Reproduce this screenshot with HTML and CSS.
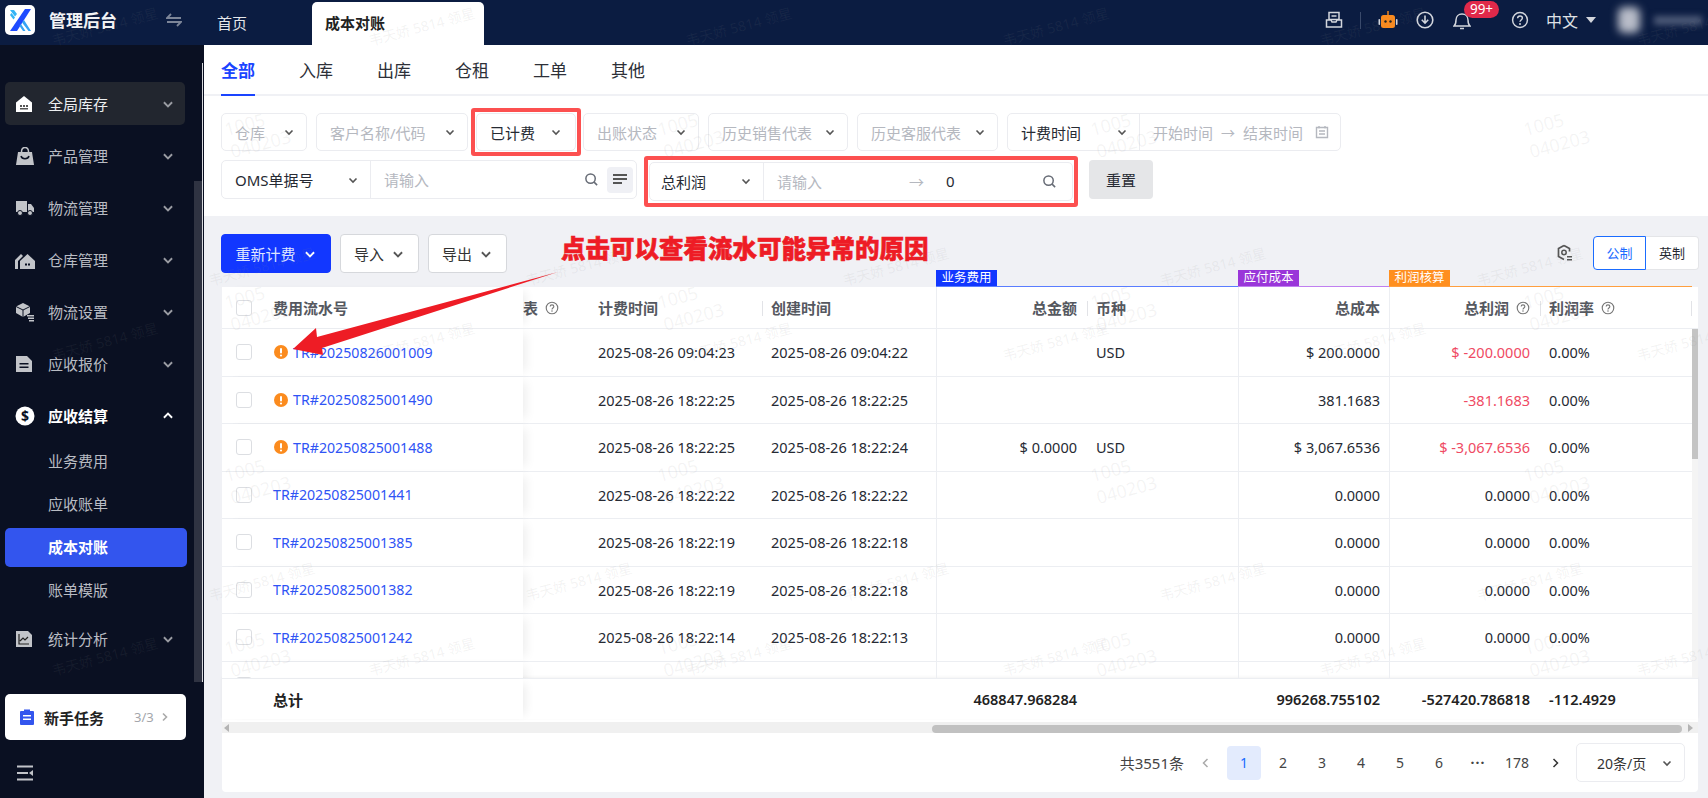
FILE: index.html
```html
<!DOCTYPE html>
<html lang="zh">
<head>
  <meta charset="UTF-8" />
  <title>成本对账</title>
  <link rel="stylesheet" href="styles.css">
</head>
<body>
  <svg class="defs" width="0" height="0">
    <symbol id="chev" viewBox="0 0 12 12"><path d="M2.5 4.5 6 8l3.5-3.5" fill="none" stroke="currentColor" stroke-width="1.6"/></symbol>
    <symbol id="help" viewBox="0 0 16 16"><circle cx="8" cy="8" r="6.6" fill="none" stroke="currentColor" stroke-width="1.3"/><path d="M5.9 6.4c0-1.2 1-2 2.1-2s2.1.8 2.1 1.9c0 1.700-2.100 1.700-2.100 3.300" fill="none" stroke="currentColor" stroke-width="1.300"/><circle cx="8" cy="11.500" r=".9" fill="currentColor"/></symbol>
    <symbol id="search" viewBox="0 0 16 16"><circle cx="7" cy="7" r="5" fill="none" stroke="currentColor" stroke-width="1.6"/><path d="m10.800 10.800 3.200 3.200" stroke="currentColor" stroke-width="1.6"/></symbol>
    <symbol id="warn" viewBox="0 0 14 14"><circle cx="7" cy="7" r="7" fill="#fb8b1e"/><rect x="6" y="3" width="2" height="5.500" rx="1" fill="#fff"/><circle cx="7" cy="10.500" r="1.100" fill="#fff"/></symbol>
  </svg>

  <header class="topbar">
    <div class="brand">
      <div class="logo">
        <svg width="26" height="26" viewBox="0 0 26 26"><path d="M3 3h4l3 4-2 2.500zM3 8l3.500 4.500L8 10.500 4.500 6z" fill="#35b4f5"/><path d="M24 2h-6L3 24h7z" fill="#1f4bff"/><path d="M15 15.500l2-2.500 7 11h-2.500zM12.500 19l1.500-2 4.500 7h-2.500z" fill="#35a4f5"/></svg>
      </div>
      <span class="brand-name">管理后台</span>
      <svg class="swap" width="16" height="14" viewBox="0 0 16 14"><path d="M5 1 1 5h14M11 13l4-4H1" fill="none" stroke="#7c8598" stroke-width="1.800"/></svg>
    </div>
    <div class="tabs-top">
      <span class="tab-home">首页</span>
      <span class="tab-cur">成本对账</span>
    </div>
    <div class="top-right">
      <svg class="ti" width="18" height="18" viewBox="0 0 18 18"><path d="M4 1.500h10v7H4zM1.500 9H6l1 2h4l1-2h4.500v7h-15zM6.500 5h5" fill="none" stroke="#d3d6dd" stroke-width="1.500"/></svg>
      <i class="top-sep"></i>
      <svg class="ti bot" width="20" height="20" viewBox="0 0 20 20"><rect x="3" y="5" width="14" height="13" rx="2.500" fill="#fb8b1e"/><rect x="9.300" y="1" width="1.400" height="4" fill="#fb8b1e"/><rect x="0.500" y="9" width="1.600" height="6" rx=".8" fill="#d3d6dd"/><rect x="17.900" y="9" width="1.600" height="6" rx=".8" fill="#d3d6dd"/><circle cx="7.500" cy="11.500" r="1.200" fill="#222"/><circle cx="12.500" cy="11.500" r="1.200" fill="#222"/></svg>
      <svg class="ti dl" width="18" height="18" viewBox="0 0 18 18"><circle cx="9" cy="9" r="7.800" fill="none" stroke="#d3d6dd" stroke-width="1.600"/><path d="M9 4.500v7M5.800 8.800 9 12.200l3.200-3.400" fill="none" stroke="#d3d6dd" stroke-width="1.600"/></svg>
      <span class="bell">
        <svg width="18" height="20" viewBox="0 0 18 20"><path d="M1 16c2-1.500 2-3 2-6 0-3.500 2.500-6 6-6s6 2.500 6 6c0 3 0 4.500 2 6zM7 18.500h4" fill="none" stroke="#d3d6dd" stroke-width="1.500"/></svg>
        <b class="badge">99+</b>
      </span>
      <svg class="ti qm" width="18" height="18"><use href="#help" fill="#d3d6dd" color="#d3d6dd"/></svg>
      <span class="lang">中文</span>
      <i class="caret"></i>
      <span class="avatar"></span>
      <span class="uname"></span>
    </div>
  </header>

  <div class="layout">
    <aside class="sidebar">
      <nav class="menu">
        <div class="mi mi-open">
          <svg width="18" height="18" viewBox="0 0 18 18"><path d="M1 7.500 9 1l8 6.500V17H1z" fill="#fff"/><path d="M5 10h2v2H5zm3 0h2v2H8zm3 0h2v2h-2zm-6 3h8v1.500H5z" fill="#555"/></svg>
          <span>全局库存</span><svg class="c" width="14" height="14"><use href="#chev"/></svg>
        </div>
        <div class="mi">
          <svg width="20" height="18" viewBox="0 0 20 18"><path d="M3 5h14l2 13H1z" fill="#c2c4c9"/><path d="M6 9c1 3.500 7 3.500 8 0" fill="none" stroke="#0a1022" stroke-width="1.500"/><path d="M6.500 5c0-6 7-6 7 0" fill="none" stroke="#c2c4c9" stroke-width="1.500"/></svg>
          <span>产品管理</span><svg class="c" width="14" height="14"><use href="#chev"/></svg>
        </div>
        <div class="mi">
          <svg width="20" height="16" viewBox="0 0 20 16"><path d="M1 1h11v11H1zm12 3h3l3 4v4h-6z" fill="#c2c4c9"/><circle cx="5" cy="13" r="2.500" fill="#c2c4c9" stroke="#0a1022"/><circle cx="15" cy="13" r="2.500" fill="#c2c4c9" stroke="#0a1022"/></svg>
          <span>物流管理</span><svg class="c" width="14" height="14"><use href="#chev"/></svg>
        </div>
        <div class="mi">
          <svg width="20" height="18" viewBox="0 0 20 18"><path d="M5 10l7.500-7 7.500 7v8H5z" fill="#c2c4c9"/><path d="M0 9l6-6 2 2-5 5v8H0z" fill="#c2c4c9"/><path d="M10 12.500h2v2h-2zm3 0h2v2h-2z" fill="#0a1022"/></svg>
          <span>仓库管理</span><svg class="c" width="14" height="14"><use href="#chev"/></svg>
        </div>
        <div class="mi">
          <svg width="20" height="20" viewBox="0 0 20 20"><path d="M8 1l7 3.500V11l-7 4-7-4V4.500z" fill="#c2c4c9"/><path d="M1 4.500 8 8l7-3.500M8 8v7" fill="none" stroke="#0a1022"/><path d="M12 13h7v1.400h-7zm1 2.500h6v1.400h-6zm1 2.500h5v1.400h-5z" fill="#c2c4c9"/></svg>
          <span>物流设置</span><svg class="c" width="14" height="14"><use href="#chev"/></svg>
        </div>
        <div class="mi">
          <svg width="18" height="18" viewBox="0 0 18 18"><path d="M1 1h11l5 5v11H1z" fill="#c2c4c9"/><path d="M4.500 8h9v1.500h-9zm0 3.500h9V13h-9z" fill="#0a1022"/></svg>
          <span>应收报价</span><svg class="c" width="14" height="14"><use href="#chev"/></svg>
        </div>
        <div class="mi mi-sec">
          <svg width="20" height="20" viewBox="0 0 20 20"><circle cx="10" cy="10" r="9.500" fill="#fff"/><text class="dollar" x="10" y="14.500" text-anchor="middle">$</text></svg>
          <span>应收结算</span><svg class="c up" width="14" height="14"><use href="#chev"/></svg>
        </div>
        <div class="sub">业务费用</div>
        <div class="sub">应收账单</div>
        <div class="sub sub-on">成本对账</div>
        <div class="sub">账单模版</div>
        <div class="mi mi-last">
          <svg width="18" height="18" viewBox="0 0 18 18"><path d="M1 1h12l4 4v12H1z" fill="#c2c4c9"/><path d="M4 4v10h10M5 11l3-3 2 2 3-3" fill="none" stroke="#222" stroke-width="1.200"/></svg>
          <span>统计分析</span><svg class="c" width="14" height="14"><use href="#chev"/></svg>
        </div>
      </nav>
      <div class="side-foot">
        <div class="task">
          <svg width="14" height="16" viewBox="0 0 14 16"><path d="M1 2h3V.5h6V2h3a1 1 0 0 1 1 1v12a1 1 0 0 1-1 1H1a1 1 0 0 1-1-1V3a1 1 0 0 1 1-1z" fill="#3355ee"/><path d="M3 6h8v1.500H3zm0 3.500h8V11H3z" fill="#fff"/></svg>
          <b>新手任务</b>
          <span class="task-n">3/3</span>
          <svg class="task-go" width="12" height="12" viewBox="0 0 12 12"><path d="M4 2.500 7.500 6 4 9.500" fill="none" stroke="#aaa" stroke-width="1.600"/></svg>
        </div>
        <svg class="collapse" width="18" height="18" viewBox="0 0 18 18"><path d="M1 2.500h16M1 15.500h16M1 9h11" stroke="#c2c4c9" stroke-width="2"/><path d="M17 6v6l-4-3z" fill="#c2c4c9"/></svg>
      </div>
      <i class="side-thumb"></i>
      <i class="side-line"></i>
    </aside>

    <main class="main">
      <section class="panel">
        <div class="tabs">
          <span class="tab tab-on">全部</span>
          <span class="tab">入库</span>
          <span class="tab">出库</span>
          <span class="tab">仓租</span>
          <span class="tab">工单</span>
          <span class="tab">其他</span>
        </div>
        <div class="filters">
          <div class="f-row">
            <div class="sel w86 ph">仓库<svg width="12" height="12"><use href="#chev"/></svg></div>
            <div class="sel w152 ph">客户名称/代码<svg width="12" height="12"><use href="#chev"/></svg></div>
            <div class="mark mark-a"><div class="sel w100">已计费<svg width="12" height="12"><use href="#chev"/></svg></div></div>
            <div class="sel w116 ph">出账状态<svg width="12" height="12"><use href="#chev"/></svg></div>
            <div class="sel w140 ph">历史销售代表<svg width="12" height="12"><use href="#chev"/></svg></div>
            <div class="sel w141 ph">历史客服代表<svg width="12" height="12"><use href="#chev"/></svg></div>
            <div class="combo">
              <div class="sel w132 inner">计费时间<svg width="12" height="12"><use href="#chev"/></svg></div>
              <div class="range ph">开始时间<span class="arrow">→</span>结束时间
                <svg class="cal" width="14" height="14" viewBox="0 0 14 14"><path d="M1.500 2.500h11v10h-11zM4 1v2.500M10 1v2.500M4 6h6M4 9h6" fill="none" stroke="#b5b8bf" stroke-width="1.400"/></svg>
              </div>
            </div>
          </div>
          <div class="f-row r2">
            <div class="combo">
              <div class="sel w149 inner">OMS单据号<svg width="12" height="12"><use href="#chev"/></svg></div>
              <div class="inp w265 ph">请输入
                <svg class="s-ic" width="15" height="15"><use href="#search"/></svg>
                <span class="lines"><i></i><i></i><i></i></span>
              </div>
            </div>
            <div class="mark mark-b">
              <div class="combo">
                <div class="sel w114 inner">总利润<svg width="12" height="12"><use href="#chev"/></svg></div>
                <div class="inp w308 ph">请输入<span class="arrow2">→</span><span class="zero">0</span>
                  <svg class="s-ic" width="15" height="15"><use href="#search"/></svg>
                </div>
              </div>
            </div>
            <button class="reset">重置</button>
          </div>
        </div>
      </section>

      <div class="toolbar">
        <button class="btn btn-pri">重新计费<svg width="14" height="14"><use href="#chev"/></svg></button>
        <button class="btn">导入<svg width="14" height="14"><use href="#chev"/></svg></button>
        <button class="btn">导出<svg width="14" height="14"><use href="#chev"/></svg></button>
        <svg class="cfg" width="16" height="18" viewBox="0 0 16 18"><path d="M7 1.500 1.500 4.500v8L7 15.500" fill="none" stroke="#555" stroke-width="1.700"/><path d="M7 1.500l5.500 3v3" fill="none" stroke="#555" stroke-width="1.700"/><circle cx="7" cy="8.500" r="2.200" fill="none" stroke="#555" stroke-width="1.500"/><path d="M10 12h5v1.400h-5zm0 3h5v1.400h-5z" fill="#555"/></svg>
        <div class="unit"><span class="unit-on">公制</span><span>英制</span></div>
      </div>

      <div class="groups">
        <div class="grp g-blue"><b>业务费用</b></div>
        <div class="grp g-purple"><b>应付成本</b></div>
        <div class="grp g-orange"><b>利润核算</b></div>
      </div>

      <section class="card">
        <div class="thead row">
          <div class="cell fz"><i class="cb"></i><span class="code">费用流水号</span></div>
          <div class="cell tail">表<svg width="14" height="14"><use href="#help"/></svg></div>
          <div class="cell hd hd-out">计费时间</div>
          <div class="cell">创建时间</div>
          <div class="cell r hd vl">总金额</div>
          <div class="cell cur">币种</div>
          <div class="cell r2c vl">总成本</div>
          <div class="cell r hd vl">总利润<svg width="14" height="14"><use href="#help"/></svg></div>
          <div class="cell cur hd">利润率<svg width="14" height="14"><use href="#help"/></svg></div>
        </div>
        <div class="tbody">
          <div class="rows">
            <div class="row">
              <div class="cell fz"><i class="cb"></i><svg class="w" width="14" height="14"><use href="#warn"/></svg><a>TR#20250826001009</a></div>
              <div class="cell"></div><div class="cell">2025-08-26 09:04:23</div><div class="cell">2025-08-26 09:04:22</div>
              <div class="cell r vl"></div><div class="cell cur">USD</div><div class="cell r2c vl">$ 200.0000</div><div class="cell r vl neg">$ -200.0000</div><div class="cell cur">0.00%</div>
            </div>
            <div class="row">
              <div class="cell fz"><i class="cb"></i><svg class="w" width="14" height="14"><use href="#warn"/></svg><a>TR#20250825001490</a></div>
              <div class="cell"></div><div class="cell">2025-08-26 18:22:25</div><div class="cell">2025-08-26 18:22:25</div>
              <div class="cell r vl"></div><div class="cell cur"></div><div class="cell r2c vl">381.1683</div><div class="cell r vl neg">-381.1683</div><div class="cell cur">0.00%</div>
            </div>
            <div class="row">
              <div class="cell fz"><i class="cb"></i><svg class="w" width="14" height="14"><use href="#warn"/></svg><a>TR#20250825001488</a></div>
              <div class="cell"></div><div class="cell">2025-08-26 18:22:25</div><div class="cell">2025-08-26 18:22:24</div>
              <div class="cell r vl">$ 0.0000</div><div class="cell cur">USD</div><div class="cell r2c vl">$ 3,067.6536</div><div class="cell r vl neg">$ -3,067.6536</div><div class="cell cur">0.00%</div>
            </div>
            <div class="row">
              <div class="cell fz"><i class="cb"></i><a>TR#20250825001441</a></div>
              <div class="cell"></div><div class="cell">2025-08-26 18:22:22</div><div class="cell">2025-08-26 18:22:22</div>
              <div class="cell r vl"></div><div class="cell cur"></div><div class="cell r2c vl">0.0000</div><div class="cell r vl">0.0000</div><div class="cell cur">0.00%</div>
            </div>
            <div class="row">
              <div class="cell fz"><i class="cb"></i><a>TR#20250825001385</a></div>
              <div class="cell"></div><div class="cell">2025-08-26 18:22:19</div><div class="cell">2025-08-26 18:22:18</div>
              <div class="cell r vl"></div><div class="cell cur"></div><div class="cell r2c vl">0.0000</div><div class="cell r vl">0.0000</div><div class="cell cur">0.00%</div>
            </div>
            <div class="row">
              <div class="cell fz"><i class="cb"></i><a>TR#20250825001382</a></div>
              <div class="cell"></div><div class="cell">2025-08-26 18:22:19</div><div class="cell">2025-08-26 18:22:18</div>
              <div class="cell r vl"></div><div class="cell cur"></div><div class="cell r2c vl">0.0000</div><div class="cell r vl">0.0000</div><div class="cell cur">0.00%</div>
            </div>
            <div class="row">
              <div class="cell fz"><i class="cb"></i><a>TR#20250825001242</a></div>
              <div class="cell"></div><div class="cell">2025-08-26 18:22:14</div><div class="cell">2025-08-26 18:22:13</div>
              <div class="cell r vl"></div><div class="cell cur"></div><div class="cell r2c vl">0.0000</div><div class="cell r vl">0.0000</div><div class="cell cur">0.00%</div>
            </div>
            <div class="row">
              <div class="cell fz"><i class="cb"></i></div>
              <div class="cell"></div><div class="cell"></div><div class="cell"></div>
              <div class="cell r vl"></div><div class="cell cur"></div><div class="cell r2c vl"></div><div class="cell r vl"></div><div class="cell cur"></div>
            </div>
          </div>
          <div class="vbar"><i></i></div>
        </div>
        <div class="tfoot row">
          <div class="cell fz"><span class="code total">总计</span></div>
          <div class="cell"></div><div class="cell"></div><div class="cell"></div>
          <div class="cell r">468847.968284</div><div class="cell"></div><div class="cell r2c">996268.755102</div><div class="cell r">-527420.786818</div><div class="cell cur">-112.4929</div>
        </div>
        <div class="hbar"><i class="al"></i><i class="thumb"></i><i class="ar"></i></div>
        <div class="pager">
          <span class="total-n">共3551条</span>
          <svg class="pg-a" width="12" height="12" viewBox="0 0 12 12"><path d="M7.500 2 3.500 6l4 4" fill="none" stroke="#aaa" stroke-width="1.500"/></svg>
          <span class="pg on">1</span><span class="pg">2</span><span class="pg">3</span><span class="pg">4</span><span class="pg">5</span><span class="pg">6</span><span class="pg dots">···</span><span class="pg">178</span>
          <svg class="pg-a next" width="12" height="12" viewBox="0 0 12 12"><path d="M4.500 2l4 4-4 4" fill="none" stroke="#333" stroke-width="1.500"/></svg>
          <div class="sel size">20条/页<svg width="12" height="12"><use href="#chev"/></svg></div>
        </div>
      </section>
    </main>
  </div>

  <!-- 标注 -->
  <div class="note">点击可以查看流水可能异常的原因</div>
  <svg class="note-arrow" width="1708" height="798" viewBox="0 0 1708 798"><polygon points="558,272 317,337 316,328 293,349 323,355 322,348" fill="#ee1c25"/></svg>

  <!-- 水印 -->
  <div class="wm-wrap">
    <div class="wm wm-a">
      <span>韦天娇 5814 领星</span><span>韦天娇 5814 领星</span><span>韦天娇 5814 领星</span><span>韦天娇 5814 领星</span><span>韦天娇 5814 领星</span><span>韦天娇 5814 领星</span>
      <span>韦天娇 5814 领星</span><span>韦天娇 5814 领星</span><span>韦天娇 5814 领星</span><span>韦天娇 5814 领星</span><span>韦天娇 5814 领星</span><span>韦天娇 5814 领星</span>
      <span>韦天娇 5814 领星</span><span>韦天娇 5814 领星</span><span>韦天娇 5814 领星</span><span>韦天娇 5814 领星</span><span>韦天娇 5814 领星</span><span>韦天娇 5814 领星</span>
    </div>
    <div class="wm wm-b">
      <span>韦天娇 5814 领星</span><span>韦天娇 5814 领星</span><span>韦天娇 5814 领星</span><span>韦天娇 5814 领星</span><span>韦天娇 5814 领星</span>
      <span>韦天娇 5814 领星</span><span>韦天娇 5814 领星</span><span>韦天娇 5814 领星</span><span>韦天娇 5814 领星</span><span>韦天娇 5814 领星</span>
    </div>
    <div class="wm wm-c">
      <span>1005<br>040203</span><span>1005<br>040203</span><span>1005<br>040203</span><span>1005<br>040203</span>
      <span>1005<br>040203</span><span>1005<br>040203</span><span>1005<br>040203</span><span>1005<br>040203</span>
      <span>1005<br>040203</span><span>1005<br>040203</span><span>1005<br>040203</span><span>1005<br>040203</span>
      <span>1005<br>040203</span><span>1005<br>040203</span><span>1005<br>040203</span><span>1005<br>040203</span>
    </div>
  </div>
</body>
</html>
```

FILE: styles.css
```css
* {
    margin: 0;
    padding: 0;
    box-sizing: border-box;
}

body {
    position: relative;
    width: 1708px;
    height: 798px;
    overflow: hidden;
    font-family: "Noto Sans", "Noto Sans CJK SC", sans-serif;
    font-size: 14.5px;
    color: #262a33;
    background: #f0f1f5;
}

i {
    font-style: normal;
}

.defs {
    position: absolute;
}

/* top bar */
.topbar {
    height: 45px;
    display: flex;
    background: #0b1c41;
    color: #e4e6ea;
}

.brand {
    width: 204px;
    display: flex;
    align-items: center;
    padding-left: 5px;
    padding-bottom: 6px;
}

.logo {
    width: 30px;
    height: 30px;
    border-radius: 5px;
    background: #fff;
    display: flex;
    align-items: center;
    justify-content: center;
}

.brand-name {
    margin-left: 14px;
    font-size: 17px;
    font-weight: 700;
    color: #f2f3f5;
}

.swap {
    margin-left: 49px;
}

.tabs-top {
    display: flex;
    align-items: flex-end;
    flex: 1;
}

.tab-home {
    margin-left: 13px;
    width: 95px;
    height: 43px;
    line-height: 43px;
    font-size: 15px;
}

.tab-cur {
    width: 172px;
    height: 43px;
    line-height: 43px;
    padding-left: 13px;
    background: #fff;
    color: #222;
    font-size: 15px;
    font-weight: 700;
    border-radius: 5px 5px 0 0;
}

.top-right {
    position: relative;
    width: 408px;
    display: flex;
    align-items: center;
    padding-bottom: 5px;
    padding-left: 25px;
    font-size: 15px;
}

.top-sep {
    width: 1px;
    height: 17px;
    background: #3a4a6b;
    margin: 0 17px;
}

.dl {
    margin-left: 18px;
}

.bell {
    position: relative;
    display: flex;
    margin-left: 19px;
}

.badge {
    position: absolute;
    left: 11px;
    top: -9px;
    width: 35px;
    height: 17px;
    line-height: 17px;
    border-radius: 9px;
    text-align: center;
    background: #e0294a;
    color: #fff;
    font-size: 13.5px;
    font-weight: 400;
}

.qm {
    margin-left: 40px;
    color: #d3d6dd;
}

.lang {
    margin-left: 17px;
    font-size: 16px;
    color: #dfe1e6;
}

.caret {
    width: 0;
    height: 0;
    margin-left: 8px;
    border: 5px solid transparent;
    border-top: 6px solid #d3d6dd;
    border-bottom: 0;
}

.avatar {
    width: 22px;
    height: 26px;
    margin-left: 22px;
    border-radius: 6px;
    background: #b8bcc8;
    filter: blur(4px);
}

.uname {
    width: 48px;
    height: 9px;
    margin-left: 14px;
    background: #4d5a78;
    filter: blur(3px);
}

/* side menu */
.layout {
    display: flex;
    height: 753px;
}

.sidebar {
    position: relative;
    width: 204px;
    background: #0a1022;
    display: flex;
    flex-direction: column;
    color: #b9bcc3;
    font-size: 15px;
}

.menu {
    padding: 37px 17px 0 5px;
}

.mi {
    position: relative;
    height: 43px;
    margin-bottom: 9px;
    display: flex;
    align-items: center;
    border-radius: 5px;
}

.mi > svg:first-child {
    position: absolute;
    left: 10px;
}

.mi span {
    margin-left: 43px;
    flex: 1;
}

.mi .c {
    margin-right: 12px;
    color: #9a9ca3;
    stroke-width: 2;
}

.mi .up {
    transform: rotate(180deg);
    color: #fff;
}

.mi:first-child {
    margin-right: 2px;
    background: #22262f;
    color: #eceef0;
}

.mi:first-child .c {
    margin-right: 10px;
}

.mi-sec {
    margin-bottom: 5px;
    color: #fff;
    font-weight: 700;
}

.dollar {
    font-size: 14px;
    font-weight: 700;
    fill: #0a1022;
}

.sub {
    height: 39px;
    margin-bottom: 4px;
    line-height: 39px;
    padding-left: 43px;
    border-radius: 5px;
}

.sub-on {
    background: #3355ee;
    color: #fff;
    font-weight: 700;
}

.mi-last {
    margin-top: 7px;
}

.side-foot {
    margin-top: auto;
    padding: 0 0 16px 5px;
}

.task {
    width: 181px;
    height: 46px;
    display: flex;
    align-items: center;
    padding-left: 15px;
    background: #fff;
    border-radius: 5px;
    color: #222;
}

.task b {
    margin-left: 10px;
    font-size: 15px;
}

.task-n {
    margin-left: 30px;
    font-size: 13px;
    color: #a4a6ab;
}

.task-go {
    margin-left: 5px;
}

.collapse {
    display: block;
    margin: 24px 0 0 11px;
}

.side-thumb {
    position: absolute;
    left: 194px;
    top: 136px;
    width: 8px;
    height: 501px;
    background: #2f3342;
}

.side-line {
    position: absolute;
    left: 202px;
    top: 18px;
    width: 1px;
    height: 619px;
    background: #d9dade;
}

/* main */
.main {
    flex: 1;
    min-width: 0;
}

.panel {
    height: 171px;
    background: #fff;
}

.tabs {
    height: 51px;
    display: flex;
    gap: 44px;
    padding-left: 17px;
    border-bottom: 2px solid #f0f1f5;
}

.tab {
    height: 51px;
    line-height: 51px;
    font-size: 17px;
    color: #2d3038;
}

.tab-on {
    color: #1a44ff;
    font-weight: 700;
    border-bottom: 2px solid #1a44ff;
}

.filters {
    padding: 17px 0 0 17px;
}

.f-row {
    display: flex;
    align-items: center;
    height: 38px;
    gap: 9px;
    font-size: 15px;
}

.f-row.r2 {
    height: 39px;
    margin-top: 9px;
    gap: 7px;
}

.sel {
    height: 38px;
    display: flex;
    align-items: center;
    justify-content: space-between;
    padding: 0 11px 0 13px;
    border: 1.5px solid #ebecf0;
    border-radius: 5px;
    background: #fff;
    flex: none;
}

.sel svg {
    color: #555;
    flex: none;
}

.ph {
    color: #b5b8bf;
}

.w86 { width: 86px; }
.w152 { width: 152px; }
.w100 { width: 100px; }
.w114 { width: 114px; }
.w116 { width: 116px; }
.w140 { width: 140px; }
.w141 { width: 141px; }
.w132 { width: 132px; }
.w149 { width: 149px; }
.w265 { width: 265px; }
.w308 { width: 308px; }

.combo {
    display: flex;
    height: 38px;
    border: 1.5px solid #ebecf0;
    border-radius: 5px;
    background: #fff;
}

.r2 .combo {
    height: 39px;
}

.sel.inner {
    height: auto;
    border: 0;
    border-right: 1.5px solid #ebecf0;
    border-radius: 0;
    background: transparent;
}

.range {
    width: 200px;
    display: flex;
    align-items: center;
    padding-left: 13px;
}

.arrow {
    margin: 0 8px;
    font-size: 14px;
}

.cal {
    margin-left: 12px;
}

.inp {
    position: relative;
    display: flex;
    align-items: center;
    padding-left: 13px;
}

.inp .s-ic {
    position: absolute;
    left: 213px;
    color: #666b75;
}

.w308 .s-ic {
    left: 278px;
}

.lines {
    position: absolute;
    right: 3px;
    width: 26px;
    height: 26px;
    padding: 7px 6px;
    background: #eff0f5;
    border-radius: 4px;
    display: flex;
    flex-direction: column;
    gap: 2px;
}

.lines i {
    height: 2px;
    background: #555;
}

.lines i:last-child {
    width: 9px;
}

.arrow2 {
    margin-left: 87px;
    font-size: 15px;
}

.zero {
    margin-left: 22px;
    color: #262a33;
}

/* 红框 */
.mark {
    flex: none;
    border: 4px solid #fc5050;
    border-radius: 3px;
    padding: 1px 1px;
    background: #fff;
}

.mark-a {
    margin: -5px -7px -5px -6px;
    height: 48px;
    display: flex;
    align-items: center;
}

.mark-a .sel {
    height: 38px;
    padding-right: 13px;
}

.f-row.r2 .mark-b {
    margin: -4px -7px -7px 0;
    height: 51px;
    display: flex;
    align-items: center;
    padding: 1px;
}

.mark-b .sel {
    padding-left: 11px;
}

.reset {
    margin-left: 11px;
    width: 64px;
    height: 39px;
    border: 0;
    border-radius: 4px;
    background: #e5e6e8;
    font: inherit;
    font-size: 15px;
    color: #262a33;
}

/* toolbar */
.toolbar {
    display: flex;
    align-items: flex-start;
    height: 54px;
    padding: 18px 9px 0 17px;
    gap: 9px;
}

.btn {
    width: 79px;
    height: 39px;
    flex: none;
    display: flex;
    align-items: center;
    justify-content: center;
    gap: 7px;
    white-space: nowrap;
    background: #fff;
    border: 1.5px solid #d6d8dc;
    border-radius: 4px;
    font: inherit;
    font-size: 15px;
    color: #333;
}

.btn svg {
    color: #555;
}

.btn-pri {
    width: 110px;
    background: #1237ff;
    border-color: #1237ff;
    color: #dfe5ff;
}

.btn-pri svg {
    color: #fff;
}

.cfg {
    margin: 10px 11px 0 auto;
}

.unit {
    display: flex;
    height: 34px;
    margin-top: 2px;
    font-size: 13px;
}

.unit span {
    width: 53px;
    line-height: 32px;
    text-align: center;
    background: #fff;
    border: 1px solid #e4e5e8;
    border-left: 0;
    border-radius: 0 4px 4px 0;
}

.unit .unit-on {
    border: 1px solid #1a6cff;
    border-radius: 4px 0 0 4px;
    color: #1a6cff;
}

/* 分组标签 */
.groups {
    position: relative;
    display: grid;
    grid-template-columns: 302px 151px 303px;
    height: 17px;
    margin-left: 732px;
    margin-right: 16px;
}

.grp {
    border-bottom: 1px solid;
    font-size: 12.500px;
    color: #fff;
}

.grp b {
    display: block;
    width: 61px;
    height: 16px;
    line-height: 16px;
    text-align: center;
    font-weight: 400;
}

.g-blue { border-color: #5a7dff; }
.g-blue b { background: #1237ff; }
.g-purple { border-color: #c07ff0; }
.g-purple b { background: #9a36d9; }
.g-orange { border-color: #ff9f3f; }
.g-orange b { background: #ff8f1f; }

/* table */
.card {
    margin: 0 10px 0 18px;
    height: 505px;
    background: #fff;
    border-radius: 0 0 4px 4px;
}

.row {
    display: grid;
    grid-template-columns: 301px 62px 173px 178px 152px 150px 151px 152px 151px;
    height: 47.500px;
    border-bottom: 1px solid #eceef2;
}

.thead {
    height: 42px;
    width: 1476px;
    color: #555860;
    font-weight: 700;
    font-size: 15px;
}

.cell {
    position: relative;
    display: flex;
    align-items: center;
    padding-left: 13px;
    white-space: nowrap;
    min-width: 0;
}

.fz {
    z-index: 1;
    background: #fff;
    box-shadow: 8px 0 10px -5px rgba(0, 0, 0, 0.07);
    padding-left: 14px;
}

.cb {
    width: 16px;
    height: 16px;
    margin-right: 21px;
    flex: none;
    background: #fff;
    border: 1.500px solid #dcdee2;
    border-radius: 3px;
}

.code {
    font-size: 15px;
}

.total {
    margin-left: 37px;
    color: #222;
}

.w {
    margin-right: 5px;
    margin-left: 1px;
    flex: none;
}

a {
    font-size: 14.200px;
    color: #2f54f5;
}

.r {
    justify-content: flex-end;
    padding: 0 11px 0 0;
}

.r2c {
    justify-content: flex-end;
    padding: 0 9px 0 0;
}

.cur {
    padding-left: 8px;
}

.vl {
    border-left: 1px solid #eceef2;
}

.neg {
    color: #ef4a63;
}

.thead svg {
    margin-left: 7px;
    color: #777;
    flex: none;
}

.tail {
    padding-left: 0;
}

.hd::after {
    content: "";
    position: absolute;
    right: 0;
    top: 14px;
    height: 15px;
    width: 1px;
    background: #e2e3e7;
}

.hd-out::after {
    right: -5px;
}

.tbody {
    display: flex;
    height: 349px;
    overflow: hidden;
}

.rows {
    width: 1470px;
    flex: none;
}

.vbar {
    width: 6px;
    background: #f4f4f4;
}

.vbar i {
    display: block;
    height: 130px;
    background: #c4c4c4;
}

.tfoot {
    width: 1476px;
    height: 41px;
    border-top: 1px solid #eceef2;
    border-bottom: 0;
    font-weight: 600;
    font-size: 14.500px;
    color: #222;
    box-shadow: 0 -1px 3px rgba(0, 0, 0, 0.05);
}

.hbar {
    position: relative;
    height: 11px;
    margin-top: 3px;
    display: flex;
    background: #f0f0f0;
}

.hbar .thumb {
    position: absolute;
    left: 710px;
    top: 3px;
    width: 750px;
    height: 8px;
    border-radius: 4px;
    background: #c1c1c1;
}

.al, .ar {
    position: absolute;
    top: 2px;
    width: 0;
    height: 0;
    border: 4px solid transparent;
}

.al {
    left: 2px;
    border-right: 5px solid #b4b4b4;
    border-left: 0;
}

.ar {
    right: 5px;
    border-left: 5px solid #b4b4b4;
    border-right: 0;
}

.pager {
    display: flex;
    align-items: center;
    justify-content: flex-end;
    height: 59px;
    padding-right: 13px;
    font-size: 14px;
    color: #444;
}

.total-n {
    margin-right: 16px;
    font-size: 15px;
}

.pg-a {
    margin-right: 9px;
}

.pg-a.next {
    margin: 0 0 0 10px;
}

.pg {
    width: 34px;
    height: 34px;
    margin-right: 5px;
    line-height: 34px;
    text-align: center;
    border-radius: 4px;
}

.pg.on {
    margin-left: 6px;
    background: #e3ebfd;
    color: #1a6cff;
}

.dots {
    letter-spacing: 1px;
    font-weight: 700;
}

.size {
    width: 109px;
    height: 39px;
    margin-left: 15px;
    padding-left: 20px;
    color: #333;
}

/* annotation */
.note {
    position: absolute;
    z-index: 5;
    left: 561px;
    top: 233px;
    font-size: 24.500px;
    line-height: 32px;
    font-weight: 900;
    color: #ee1c25;
    -webkit-text-stroke: 0.6px #ee1c25;
}

.note-arrow {
    position: absolute;
    z-index: 5;
    left: 0;
    top: 0;
    pointer-events: none;
}

/* watermark */
.wm-wrap {
    position: absolute;
    z-index: 6;
    left: 0;
    top: 0;
    width: 1708px;
    height: 798px;
    overflow: hidden;
    pointer-events: none;
}

.wm {
    position: absolute;
    display: grid;
    color: rgba(135, 135, 135, 0.1);
}

.wm span {
    display: flex;
    align-items: center;
    justify-content: center;
    transform: rotate(-15deg);
    text-align: left;
}

.wm-a, .wm-b {
    font-size: 14px;
    grid-auto-rows: 315px;
}

.wm-a {
    left: -54px;
    top: -132px;
    grid-template-columns: repeat(6, 317px);
}

.wm-b {
    left: 103px;
    top: 108px;
    grid-template-columns: repeat(5, 317px);
}

.wm-c {
    left: 41px;
    top: 46px;
    grid-template-columns: repeat(4, 433px);
    grid-auto-rows: 173px;
    font-size: 18px;
    line-height: 23px;
    color: rgba(135, 135, 135, 0.09);
}
```
